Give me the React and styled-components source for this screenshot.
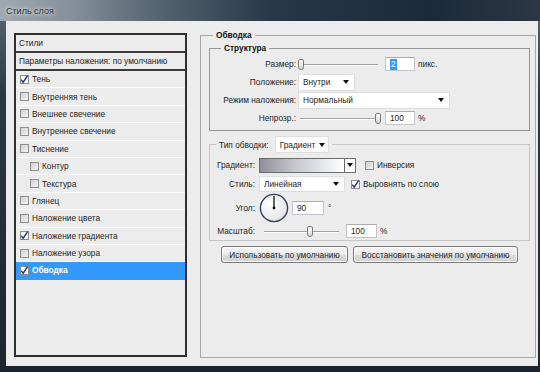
import React from 'react';
import styled, { createGlobalStyle } from 'styled-components';

const GlobalStyle = createGlobalStyle`
  html, body {
    margin: 0;
    padding: 0;
    background: #1b2430;
  }
  body {
    font-family: "Liberation Sans", Arial, sans-serif;
    font-size: 8.3px;
    color: #1e1e1e;
  }
`;

const Window = styled.div`
  width: 540px;
  height: 372px;
  display: flex;
  flex-direction: column;
  overflow: hidden;
  background: linear-gradient(180deg, #5f6b76 0%, #2c3845 25%, #1b242f 100%);
`;

const TitleBar = styled.div`
  height: 21px;
  flex: none;
  display: flex;
  align-items: center;
  padding-left: 6px;
  background: linear-gradient(90deg, #a1a9b0 0%, #838e98 14%, #52626f 30%, #27384b 50%, #1b2a3b 80%, #2a3744 100%);
  font-size: 9px;
  color: #2a2a2a;
  text-shadow: 0 0 3px #e4e8ec, 0 0 5px #e4e8ec;
`;

const Client = styled.div`
  flex: 1;
  margin: 0 2px 6px 6px;
  padding: 8px 2px 0 8px;
  display: flex;
  align-items: flex-start;
  gap: 13px;
  background: #ececec;
`;

/* ---------- left list ---------- */

const StyleList = styled.div`
  width: 173px;
  height: 324px;
  margin-top: 4px;
  box-sizing: border-box;
  border: 2px solid #2f2f2f;
  display: flex;
  flex-direction: column;
  background: #ececec;
`;

const HeadRow = styled.div`
  height: 18px;
  flex: none;
  box-sizing: border-box;
  display: flex;
  align-items: center;
  padding-left: 3px;
  border-bottom: 2px solid #3a3a3a;
`;

const CheckRow = styled.div`
  height: 17.4px;
  flex: none;
  box-sizing: border-box;
  display: flex;
  align-items: center;
  gap: 3px;
  padding-left: ${p => (p.$indent ? 14 : 4)}px;
  border-bottom: 1px solid ${p => (p.$selected ? '#3399ff' : '#fbfbfb')};
  background: ${p => (p.$selected ? '#3399ff' : 'transparent')};
  color: ${p => (p.$selected ? '#fff' : 'inherit')};
  font-weight: ${p => (p.$selected ? 'bold' : 'normal')};
`;

const Box = styled.span`
  width: 9px;
  height: 9px;
  flex: none;
  box-sizing: border-box;
  border: 1px solid #8e8f8f;
  background: ${p => (p.$checked ? '#fdfdfd' : 'linear-gradient(135deg, #cfcfcf, #f4f4f4)')};
  display: inline-flex;
  align-items: center;
  justify-content: center;
  overflow: visible;
`;

const Check = ({ checked }) => (
  <Box $checked={checked}>
    {checked && (
      <svg width="9" height="9" viewBox="0 0 9 9" style={{ overflow: 'visible' }}>
        <path d="M1.2 4.6 L3.2 7.2 L7.6 0.6" fill="none" stroke="#24367a" strokeWidth="1.4" />
      </svg>
    )}
  </Box>
);

/* ---------- right side ---------- */

const Group = styled.fieldset`
  margin: 0;
  min-width: 0;
  width: 336px;
  height: 329px;
  box-sizing: border-box;
  border: 1px solid #a9a9a9;
  padding: 1px 5px 0 8px;
`;

const SubGroup = styled.fieldset`
  margin: ${p => (p.$gap ? '5px' : '0')} 0 0 0;
  min-width: 0;
  box-sizing: border-box;
  border: 1px solid ${p => (p.$light ? '#c6c6c6' : '#959595')};
  padding: ${p => (p.$light ? '3px 0 0 6px' : '1px 0 3px 11px')};
`;

const Legend = styled.legend`
  padding: 0 3px;
  margin-left: ${p => p.$shift || 0}px;
  line-height: 12px;
  font-weight: bold;
  font-size: 8.3px;
  color: #111;
`;

const ControlLegend = styled.legend`
  padding: 0 3px;
  display: flex;
  align-items: center;
  gap: 6px;
  height: 17px;
`;

const Form = styled.div`
  display: grid;
  grid-template-columns: ${p => p.$label}px 1fr;
  grid-template-rows: ${p => p.$rows};
  column-gap: ${p => p.$colGap}px;
  align-items: center;
`;

const Label = styled.span`
  justify-self: end;
  white-space: nowrap;
`;

const Cell = styled.div`
  display: flex;
  align-items: center;
  min-width: 0;
`;

const Slider = styled.div`
  position: relative;
  flex: none;
  width: ${p => p.$w}px;
  height: 11px;
  margin-left: ${p => p.$offset || 0}px;
  &::before {
    content: '';
    position: absolute;
    left: 2px;
    right: 3px;
    top: 5px;
    height: 1px;
    background: #a3a3a3;
    box-shadow: 0 1px 0 #fff;
  }
`;

const Thumb = styled.span`
  position: absolute;
  top: 0;
  left: ${p => p.$pos}px;
  width: 6px;
  height: 11px;
  box-sizing: border-box;
  border: 1px solid #7a7a7a;
  border-radius: 2px 2px 3px 3px;
  background: linear-gradient(180deg, #ffffff, #d6d6d6);
`;

const Field = styled.span`
  width: ${p => p.$w}px;
  height: 14px;
  margin-left: ${p => p.$ml || 0}px;
  flex: none;
  box-sizing: border-box;
  border: 1px solid #c2c5ca;
  border-top-color: #abadb3;
  background: #fff;
  display: flex;
  align-items: center;
  padding-left: 4px;
`;

const Highlight = styled.span`
  background: #3399ff;
  color: #fff;
  padding: 0 1px;
  line-height: 11px;
`;

const Unit = styled.span`
  margin-left: ${p => p.$ml || 3}px;
`;

const Select = styled.span`
  width: ${p => p.$w}px;
  height: ${p => p.$h || 17}px;
  flex: none;
  box-sizing: border-box;
  border: 1px solid #dedede;
  background: #fff;
  display: flex;
  align-items: center;
  justify-content: space-between;
  gap: 4px;
  padding: 0 ${p => p.$pr || 5}px 0 4px;
  font-weight: normal;
  color: #1e1e1e;
  white-space: nowrap;
`;

const Caret = styled.span`
  flex: none;
  width: 0;
  height: 0;
  border-left: 3.5px solid transparent;
  border-right: 3.5px solid transparent;
  border-top: 4px solid #111;
`;

const Swatch = styled.span`
  width: 97px;
  height: 15px;
  flex: none;
  box-sizing: border-box;
  border: 1px solid #6a6a6a;
  display: flex;
`;

const SwatchFill = styled.span`
  flex: 1;
  background: linear-gradient(90deg, #8e9199 0%, #c9cbd0 45%, #ffffff 100%);
`;

const SwatchButton = styled.span`
  width: 10px;
  flex: none;
  border-left: 1px solid #6a6a6a;
  background: #fff;
  display: flex;
  align-items: center;
  justify-content: center;
`;

const Option = styled.span`
  display: flex;
  align-items: center;
  gap: 3px;
  margin-left: ${p => p.$ml}px;
  white-space: nowrap;
`;

const Dial = () => (
  <svg width="30" height="30" viewBox="0 0 30 30">
    <defs>
      <radialGradient id="dialFill" cx="40%" cy="35%" r="70%">
        <stop offset="0%" stopColor="#ffffff" />
        <stop offset="100%" stopColor="#e2e3e6" />
      </radialGradient>
    </defs>
    <circle cx="15" cy="15" r="13.6" fill="url(#dialFill)" stroke="#33415a" strokeWidth="1.4" />
    <line x1="15" y1="15" x2="15" y2="3" stroke="#111" strokeWidth="1.3" />
    <circle cx="15" cy="15" r="1.4" fill="#111" />
  </svg>
);

const ButtonRow = styled.div`
  display: flex;
  justify-content: center;
  gap: 5px;
  margin-top: 5px;
`;

const Button = styled.button`
  width: ${p => p.$w}px;
  height: 17px;
  padding: 0;
  font-family: inherit;
  font-size: 8.3px;
  color: #1e1e1e;
  border: 1px solid #7a7a7a;
  border-radius: 3px;
  background: linear-gradient(180deg, #f6f6f6 0%, #ebebeb 50%, #dcdcdc 51%, #d2d2d2 100%);
  box-shadow: inset 0 0 0 1px #fbfbfb;
`;

const effects = [
  { label: 'Тень', checked: true },
  { label: 'Внутренняя тень' },
  { label: 'Внешнее свечение' },
  { label: 'Внутреннее свечение' },
  { label: 'Тиснение' },
  { label: 'Контур', indent: true },
  { label: 'Текстура', indent: true },
  { label: 'Глянец' },
  { label: 'Наложение цвета' },
  { label: 'Наложение градиента', checked: true },
  { label: 'Наложение узора' },
  { label: 'Обводка', checked: true, selected: true },
];

export default function App() {
  return (
    <>
      <GlobalStyle />
      <Window>
        <TitleBar>Стиль слоя</TitleBar>
        <Client>
          <StyleList>
            <HeadRow>Стили</HeadRow>
            <HeadRow>Параметры наложения: по умолчанию</HeadRow>
            {effects.map(e => (
              <CheckRow key={e.label} $indent={e.indent} $selected={e.selected}>
                <Check checked={e.checked} />
                {e.label}
              </CheckRow>
            ))}
          </StyleList>

          <Group>
            <Legend $shift={4}>Обводка</Legend>

            <SubGroup>
              <Legend>Структура</Legend>
              <Form $label={75} $colGap={2} $rows="18px 18px 18px 18px">
                <Label>Размер:</Label>
                <Cell>
                  <Slider $w={83}><Thumb $pos={0} /></Slider>
                  <Field $w={30} $ml={4}><Highlight>2</Highlight></Field>
                  <Unit>пикс.</Unit>
                </Cell>
                <Label>Положение:</Label>
                <Cell>
                  <Select $w={57}>Внутри<Caret /></Select>
                </Cell>
                <Label>Режим наложения:</Label>
                <Cell>
                  <Select $w={152}>Нормальный<Caret /></Select>
                </Cell>
                <Label>Непрозр.:</Label>
                <Cell>
                  <Slider $w={83}><Thumb $pos={77} /></Slider>
                  <Field $w={30} $ml={4}>100</Field>
                  <Unit>%</Unit>
                </Cell>
              </Form>
            </SubGroup>

            <SubGroup $light $gap>
              <ControlLegend>
                Тип обводки:
                <Select $w={54} $pr={4}>Градиент<Caret /></Select>
              </ControlLegend>
              <Form $label={39} $colGap={4} $rows="18px 20px 28px 18px">
                <Label>Градиент:</Label>
                <Cell>
                  <Swatch>
                    <SwatchFill />
                    <SwatchButton><Caret /></SwatchButton>
                  </Swatch>
                  <Option $ml={9}><Check />Инверсия</Option>
                </Cell>
                <Label>Стиль:</Label>
                <Cell>
                  <Select $w={86} $h={16}>Линейная<Caret /></Select>
                  <Option $ml={6}><Check checked />Выровнять по слою</Option>
                </Cell>
                <Label>Угол:</Label>
                <Cell>
                  <Dial />
                  <Field $w={32} $ml={3}>90</Field>
                  <Unit $ml={4}>°</Unit>
                </Cell>
                <Label>Масштаб:</Label>
                <Cell>
                  <Slider $w={80} $offset={3}><Thumb $pos={45} /></Slider>
                  <Field $w={31} $ml={4}>100</Field>
                  <Unit>%</Unit>
                </Cell>
              </Form>
            </SubGroup>

            <ButtonRow>
              <Button $w={127}>Использовать по умолчанию</Button>
              <Button $w={165}>Восстановить значения по умолчанию</Button>
            </ButtonRow>
          </Group>
        </Client>
      </Window>
    </>
  );
}
